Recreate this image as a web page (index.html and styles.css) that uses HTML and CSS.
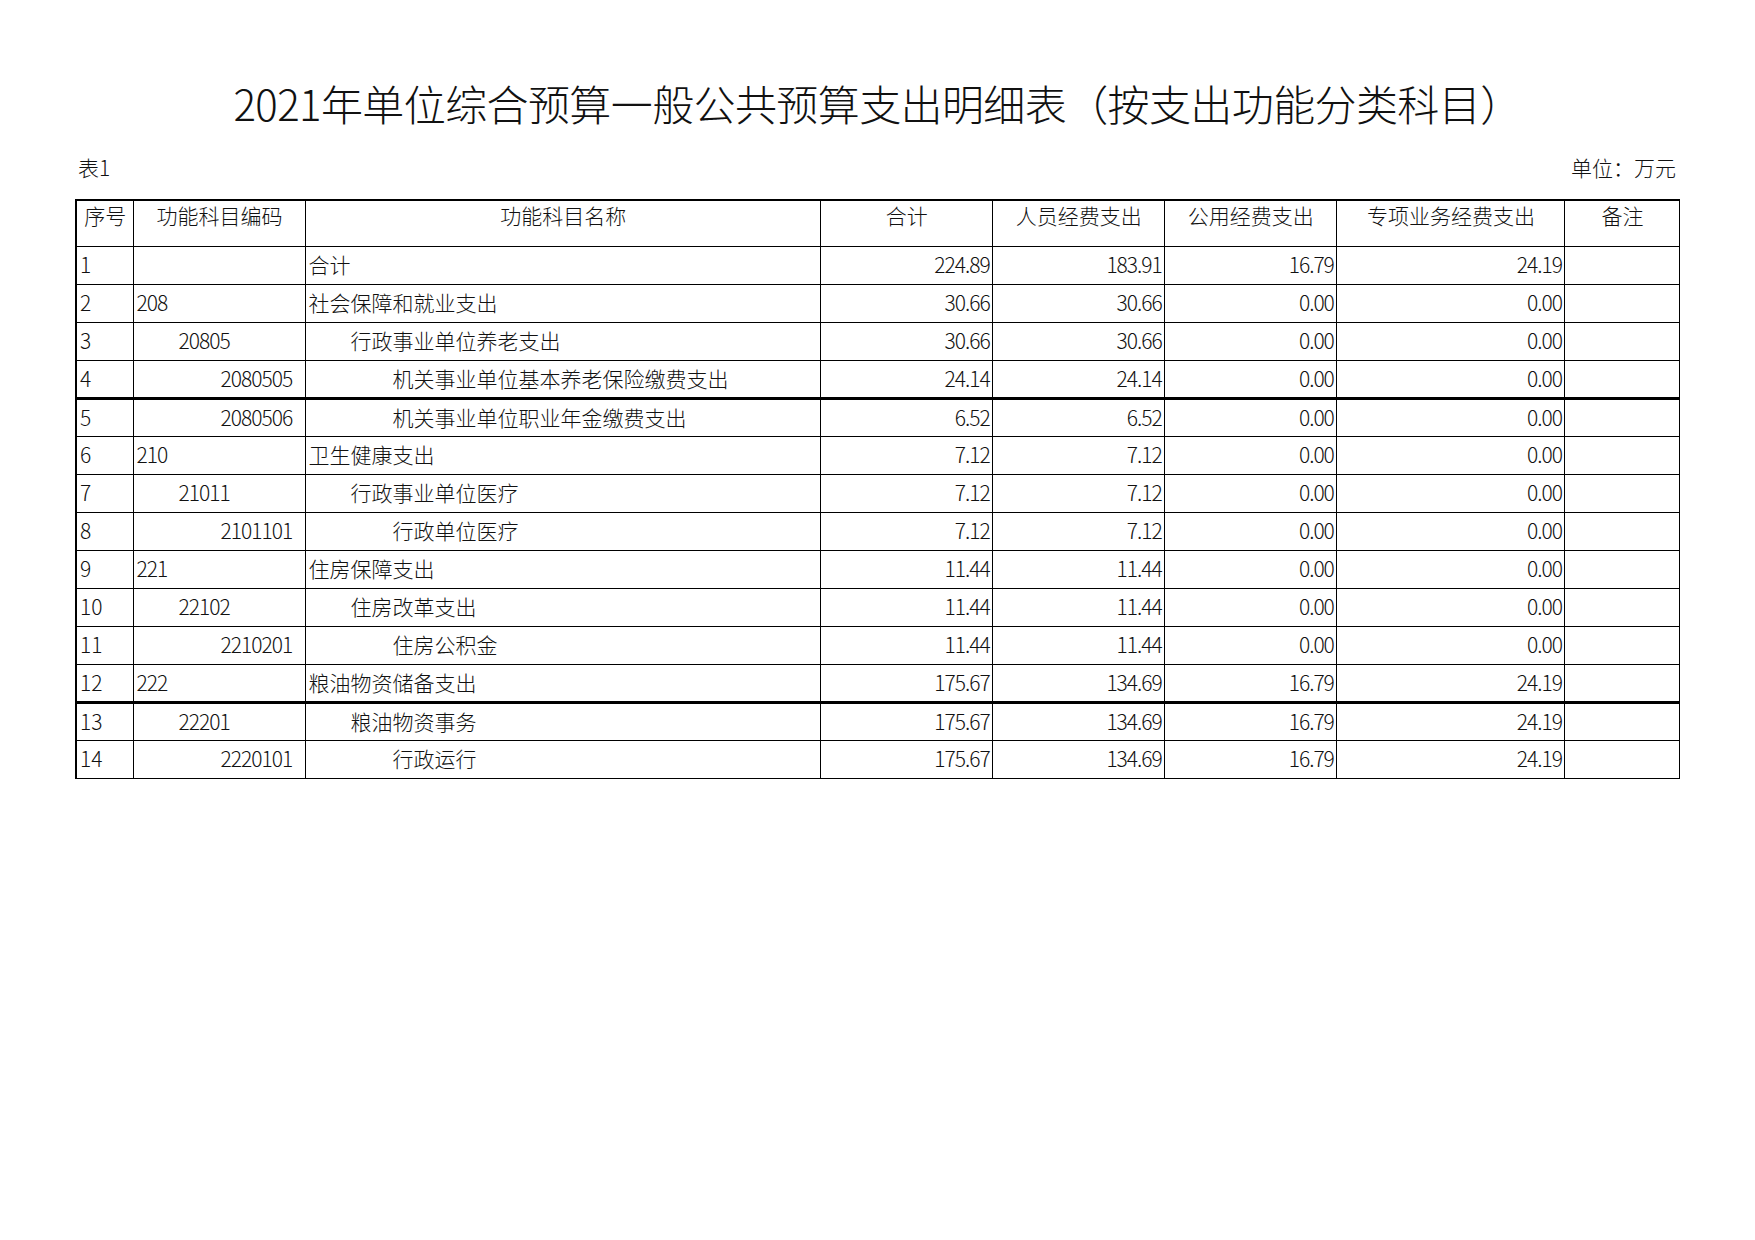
FILE: index.html
```html
<!DOCTYPE html>
<html lang="zh-CN">
<head>
<meta charset="utf-8">
<title>2021年单位综合预算一般公共预算支出明细表</title>
<link rel="stylesheet" href="styles.css">
</head>
<body>
<div class="page">
  <h1 class="title">2021年单位综合预算一般公共预算支出明细表（按支出功能分类科目）</h1>
  <div class="meta">
    <span>表1</span>
    <span>单位：万元</span>
  </div>
  <table class="sheet">
    <colgroup>
      <col class="c-no"><col class="c-code"><col class="c-name"><col class="c-num"><col class="c-num"><col class="c-num"><col class="c-spec"><col class="c-note">
    </colgroup>
    <thead>
      <tr><th>序号</th><th>功能科目编码</th><th>功能科目名称</th><th>合计</th><th>人员经费支出</th><th>公用经费支出</th><th>专项业务经费支出</th><th>备注</th></tr>
    </thead>
    <tbody>
      <tr><td>1</td><td></td><td class="name l1">合计</td><td class="num">224.89</td><td class="num">183.91</td><td class="num">16.79</td><td class="num">24.19</td><td></td></tr>
      <tr><td>2</td><td class="code l1">208</td><td class="name l1">社会保障和就业支出</td><td class="num">30.66</td><td class="num">30.66</td><td class="num">0.00</td><td class="num">0.00</td><td></td></tr>
      <tr><td>3</td><td class="code l2">20805</td><td class="name l2">行政事业单位养老支出</td><td class="num">30.66</td><td class="num">30.66</td><td class="num">0.00</td><td class="num">0.00</td><td></td></tr>
      <tr class="thick"><td>4</td><td class="code l3">2080505</td><td class="name l3">机关事业单位基本养老保险缴费支出</td><td class="num">24.14</td><td class="num">24.14</td><td class="num">0.00</td><td class="num">0.00</td><td></td></tr>
      <tr><td>5</td><td class="code l3">2080506</td><td class="name l3">机关事业单位职业年金缴费支出</td><td class="num">6.52</td><td class="num">6.52</td><td class="num">0.00</td><td class="num">0.00</td><td></td></tr>
      <tr><td>6</td><td class="code l1">210</td><td class="name l1">卫生健康支出</td><td class="num">7.12</td><td class="num">7.12</td><td class="num">0.00</td><td class="num">0.00</td><td></td></tr>
      <tr><td>7</td><td class="code l2">21011</td><td class="name l2">行政事业单位医疗</td><td class="num">7.12</td><td class="num">7.12</td><td class="num">0.00</td><td class="num">0.00</td><td></td></tr>
      <tr><td>8</td><td class="code l3">2101101</td><td class="name l3">行政单位医疗</td><td class="num">7.12</td><td class="num">7.12</td><td class="num">0.00</td><td class="num">0.00</td><td></td></tr>
      <tr><td>9</td><td class="code l1">221</td><td class="name l1">住房保障支出</td><td class="num">11.44</td><td class="num">11.44</td><td class="num">0.00</td><td class="num">0.00</td><td></td></tr>
      <tr><td>10</td><td class="code l2">22102</td><td class="name l2">住房改革支出</td><td class="num">11.44</td><td class="num">11.44</td><td class="num">0.00</td><td class="num">0.00</td><td></td></tr>
      <tr><td>11</td><td class="code l3">2210201</td><td class="name l3">住房公积金</td><td class="num">11.44</td><td class="num">11.44</td><td class="num">0.00</td><td class="num">0.00</td><td></td></tr>
      <tr class="thick"><td>12</td><td class="code l1">222</td><td class="name l1">粮油物资储备支出</td><td class="num">175.67</td><td class="num">134.69</td><td class="num">16.79</td><td class="num">24.19</td><td></td></tr>
      <tr><td>13</td><td class="code l2">22201</td><td class="name l2">粮油物资事务</td><td class="num">175.67</td><td class="num">134.69</td><td class="num">16.79</td><td class="num">24.19</td><td></td></tr>
      <tr><td>14</td><td class="code l3">2220101</td><td class="name l3">行政运行</td><td class="num">175.67</td><td class="num">134.69</td><td class="num">16.79</td><td class="num">24.19</td><td></td></tr>
    </tbody>
  </table>
</div>
</body>
</html>
```
FILE: styles.css
```css
html, body {
  margin: 0;
  padding: 0;
  background: #fff;
}
body {
  font-family: "Noto Sans CJK SC", "Noto Sans", sans-serif;
  font-weight: 300;
  color: #111;
}
.page {
  width: 1605px;
  padding: 0 75px;
}
.title {
  margin: 78px 0 0;
  font-size: 42px;
  line-height: 50px;
  font-weight: 300;
  text-align: center;
  letter-spacing: -0.6px;
}
.meta {
  display: flex;
  justify-content: space-between;
  margin-top: 27px;
  font-size: 21px;
  line-height: 24px;
  padding: 0 4px 0 3px;
}
.sheet {
  margin-top: 20px;
  width: 1605px;
  table-layout: fixed;
  border-collapse: collapse;
  border-top: 2px solid #000;
  border-left: 2px solid #000;
  border-right: 1px solid #000;
  border-bottom: 1.5px solid #000;
  font-size: 21px;
}
.c-no { width: 57px; }
.c-code { width: 172px; }
.c-name { width: 515px; }
.c-num { width: 172px; }
.c-spec { width: 228px; }
.c-note { width: 115px; }
.sheet th,
.sheet td {
  border: 1px solid #000;
  padding: 0 2px 0 3px;
  white-space: nowrap;
  overflow: hidden;
}
.sheet th {
  height: 46px;
  font-weight: 300;
  text-align: center;
  vertical-align: top;
  padding-top: 0;
  padding-bottom: 0;
  line-height: 28px;
  box-sizing: border-box;
}
.sheet td {
  height: 38px;
  box-sizing: border-box;
  line-height: 24px;
  text-align: left;
  vertical-align: middle;
  padding-bottom: 2px;
}
.sheet tr.thick td {
  border-bottom: 3px solid #000;
}
.sheet td.num {
  text-align: right;
  letter-spacing: -1px;
  padding-right: 2px;
}
.sheet td.code {
  letter-spacing: -1px;
}
.l1 { padding-left: 3px !important; }
.l2 { padding-left: 45px !important; }
.l3 { padding-left: 87px !important; }
```
